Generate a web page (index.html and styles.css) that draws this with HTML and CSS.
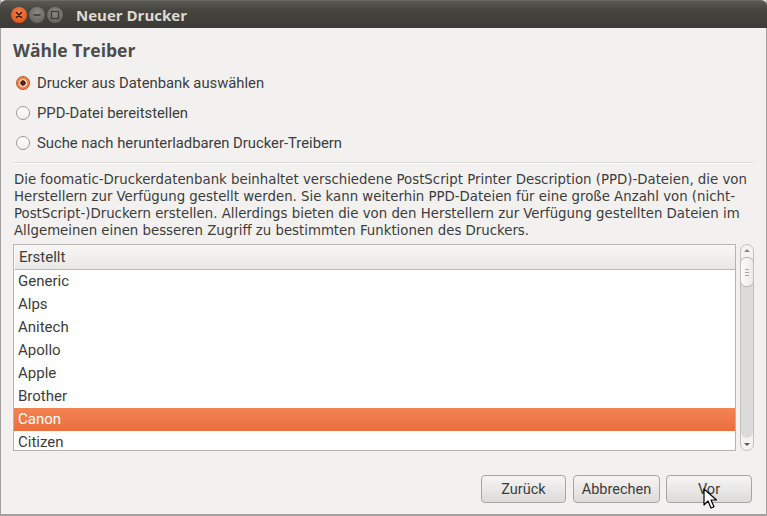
FILE: index.html
```html
<!DOCTYPE html>
<html lang="de">
<head>
<meta charset="utf-8">
<title>Neuer Drucker</title>
<link rel="stylesheet" href="styles.css">
</head>
<body>
<div class="window">
  <div class="titlebar">
    <div class="wm-buttons">
      <span class="wm close"><svg width="16" height="16" viewBox="0 0 16 16"><path d="M5.5 5.5l5 5M10.5 5.5l-5 5" stroke="#3a1a0c" stroke-width="1.5" stroke-linecap="round"/></svg></span>
      <span class="wm min"><svg width="16" height="16" viewBox="0 0 16 16"><path d="M4.5 8h7" stroke="#3a3935" stroke-width="1.5"/></svg></span>
      <span class="wm max"><svg width="16" height="16" viewBox="0 0 16 16"><rect x="4.5" y="4.5" width="7" height="7" fill="none" stroke="#3a3935" stroke-width="1.2"/></svg></span>
    </div>
    <div class="title">Neuer Drucker</div>
  </div>
  <div class="content">
    <h1 class="heading">Wähle Treiber</h1>
    <div class="radios">
      <label class="radio"><span class="dot checked"></span>Drucker aus Datenbank auswählen</label>
      <label class="radio"><span class="dot"></span>PPD-Datei bereitstellen</label>
      <label class="radio"><span class="dot"></span>Suche nach herunterladbaren Drucker-Treibern</label>
    </div>
    <div class="sep"></div>
    <p class="desc">Die foomatic-Druckerdatenbank beinhaltet verschiedene PostScript Printer Description (PPD)-Dateien, die von<br>Herstellern zur Verfügung gestellt werden. Sie kann weiterhin PPD-Dateien für eine große Anzahl von (nicht-<br>PostScript-)Druckern erstellen. Allerdings bieten die von den Herstellern zur Verfügung gestellten Dateien im<br>Allgemeinen einen besseren Zugriff zu bestimmten Funktionen des Druckers.</p>
    <div class="listarea">
      <div class="list">
        <div class="list-head">Erstellt</div>
        <div class="rows">
          <div class="row">Generic</div>
          <div class="row">Alps</div>
          <div class="row">Anitech</div>
          <div class="row">Apollo</div>
          <div class="row">Apple</div>
          <div class="row">Brother</div>
          <div class="row selected">Canon</div>
          <div class="row">Citizen</div>
        </div>
      </div>
      <div class="scrollbar">
        <div class="arrow up"></div>
        <div class="track"><div class="thumb"><span></span><span></span><span></span></div></div>
        <div class="arrow down"></div>
      </div>
    </div>
    <div class="buttons">
      <button class="btn btn-back">Zurück</button>
      <button class="btn btn-cancel">Abbrechen</button>
      <button class="btn btn-next">Vor</button>
    </div>
  </div>
  <svg class="cursor" width="14" height="22" viewBox="0 0 14 22"><path d="M1 1v16l4-4 3 7 3-1.3-3-6.7h5.5z" fill="#fff" stroke="#000" stroke-width="1.2" stroke-linejoin="round"/></svg>
</div>
</body>
</html>
```
FILE: styles.css
```css
* { box-sizing: border-box; }
html, body { margin: 0; padding: 0; }
body {
  width: 767px;
  height: 516px;
  overflow: hidden;
  background: #f2f1f0;
  font-family: "Roboto", "DejaVu Sans", sans-serif;
  color: #3c3c3c;
}
.window {
  position: relative;
  width: 767px;
  height: 516px;
  display: flex;
  flex-direction: column;
  background: #f2f1f0;
  border-left: 1px solid #a3a19d;
  border-right: 1px solid #a3a19d;
  border-bottom: 2px solid #a3a19d;
}
.titlebar {
  height: 28px;
  flex: none;
  display: flex;
  align-items: center;
  margin: 0 -1px;
  padding-left: 11px;
  background: linear-gradient(#5a5852 0%, #46443f 35%, #3d3b37 100%);
  border-radius: 6px 6px 0 0;
  border-top: 1px solid #6b6963;
}
.wm-buttons { display: flex; gap: 2px; }
.wm {
  width: 16px; height: 16px; border-radius: 50%;
  display: block;
}
.wm svg { display: block; }
.close { background: radial-gradient(circle at 50% 35%, #f6824e, #e35a1c 70%, #c94810); }
.min, .max { background: radial-gradient(circle at 50% 35%, #8c8a85, #66645f 75%, #5a5853); }
.title {
  margin-left: 13px;
  font-family: "Open Sans", "DejaVu Sans", sans-serif;
  font-weight: 700;
  font-size: 15px;
  color: #dfdbd2;
}
.content {
  flex: 1;
  display: flex;
  flex-direction: column;
  padding: 0 12px 0 12px;
}
.heading {
  margin: 12px 0 0 0;
  font-family: "Open Sans", "DejaVu Sans", sans-serif;
  font-weight: 700;
  font-size: 17.5px;
  line-height: 21px;
  color: #4c4c4c;
}
.radios {
  display: flex;
  flex-direction: column;
  margin-top: 11px;
  gap: 8px;
}
.radio {
  display: flex;
  align-items: center;
  height: 22px;
  font-size: 14.8px;
  padding-left: 3px;
}
.dot {
  width: 14px; height: 14px;
  border-radius: 50%;
  border: 1px solid #9b9995;
  background: linear-gradient(#ffffff, #f0efee);
  margin-right: 7px;
  flex: none;
}
.dot.checked {
  border-color: #c8521c;
  background: radial-gradient(circle, #5a2410 0 2.4px, #f7d7c7 3px 3.6px, #f08a58 4.4px, #e5632b 100%);
}
.sep {
  height: 1px;
  background: #d9d7d4;
  margin: 8px 1px 0 1px;
  box-shadow: 0 1px 0 #ffffff;
}
.desc {
  margin: 7px 0 0 1px;
  font-family: "DejaVu Sans Condensed", "DejaVu Sans", sans-serif;
  font-stretch: condensed;
  font-size: 14.8px;
  line-height: 17px;
  white-space: nowrap;
  color: #3c3c3c;
}
.listarea {
  display: flex;
  margin-top: 6px;
  height: 207px;
  gap: 4px;
}
.list {
  width: 725px;
  border: 1px solid #b7b5b1;
  background: #ffffff;
  overflow: hidden;
  display: flex;
  flex-direction: column;
}
.list-head {
  height: 25px;
  flex: none;
  line-height: 24px;
  padding-left: 4px;
  font-size: 15px;
  background: linear-gradient(#f8f7f6, #e9e8e6);
  border-bottom: 1px solid #bab8b4;
  border-left: 1px solid #ffffff;
}
.row {
  height: 23px;
  line-height: 23px;
  padding-left: 4px;
  font-size: 15px;
}
.row.selected {
  background: linear-gradient(#f38353, #ec6f3d);
  color: #ffffff;
}
.scrollbar {
  width: 14px;
  display: flex;
  flex-direction: column;
  border: 1px solid #c2c0bc;
  border-radius: 7px;
  background: #f4f3f2;
  overflow: hidden;
}
.arrow {
  height: 12px;
  flex: none;
  position: relative;
}
.arrow::after {
  content: "";
  position: absolute;
  left: 3px;
  border-left: 3px solid transparent;
  border-right: 3px solid transparent;
}
.arrow.up::after { top: 4px; border-bottom: 3px solid #8a8883; }
.arrow.down::after { top: 5px; border-top: 3px solid #5a5853; }
.track {
  flex: 1;
  background: #dcdbd9;
  border-radius: 6px;
}
.thumb {
  height: 30px;
  border: 1px solid #b7b5b1;
  border-radius: 6px;
  background: linear-gradient(90deg, #fbfbfa, #ecebea);
  display: flex;
  flex-direction: column;
  align-items: center;
  justify-content: center;
  gap: 2px;
  margin: 0 -1px;
}
.thumb span {
  width: 4px; height: 1px; background: #a8a6a2;
}
.buttons {
  display: flex;
  justify-content: flex-end;
  gap: 8px;
  margin-top: 24px;
  padding-right: 2px;
}
.btn {
  height: 28px;
  border: 1px solid #a7a5a1;
  border-radius: 4px;
  background: linear-gradient(#f6f5f4, #dddbd8);
  font-family: "Roboto", "DejaVu Sans", sans-serif;
  font-size: 14.5px;
  color: #3c3c3c;
  padding: 0;
}
.btn-back { width: 85px; }
.btn-cancel { width: 87px; margin-left: -1px; }
.btn-next { width: 86px; margin-left: -2px; }
.cursor {
  position: absolute;
  left: 702px;
  top: 488px;
}
```
